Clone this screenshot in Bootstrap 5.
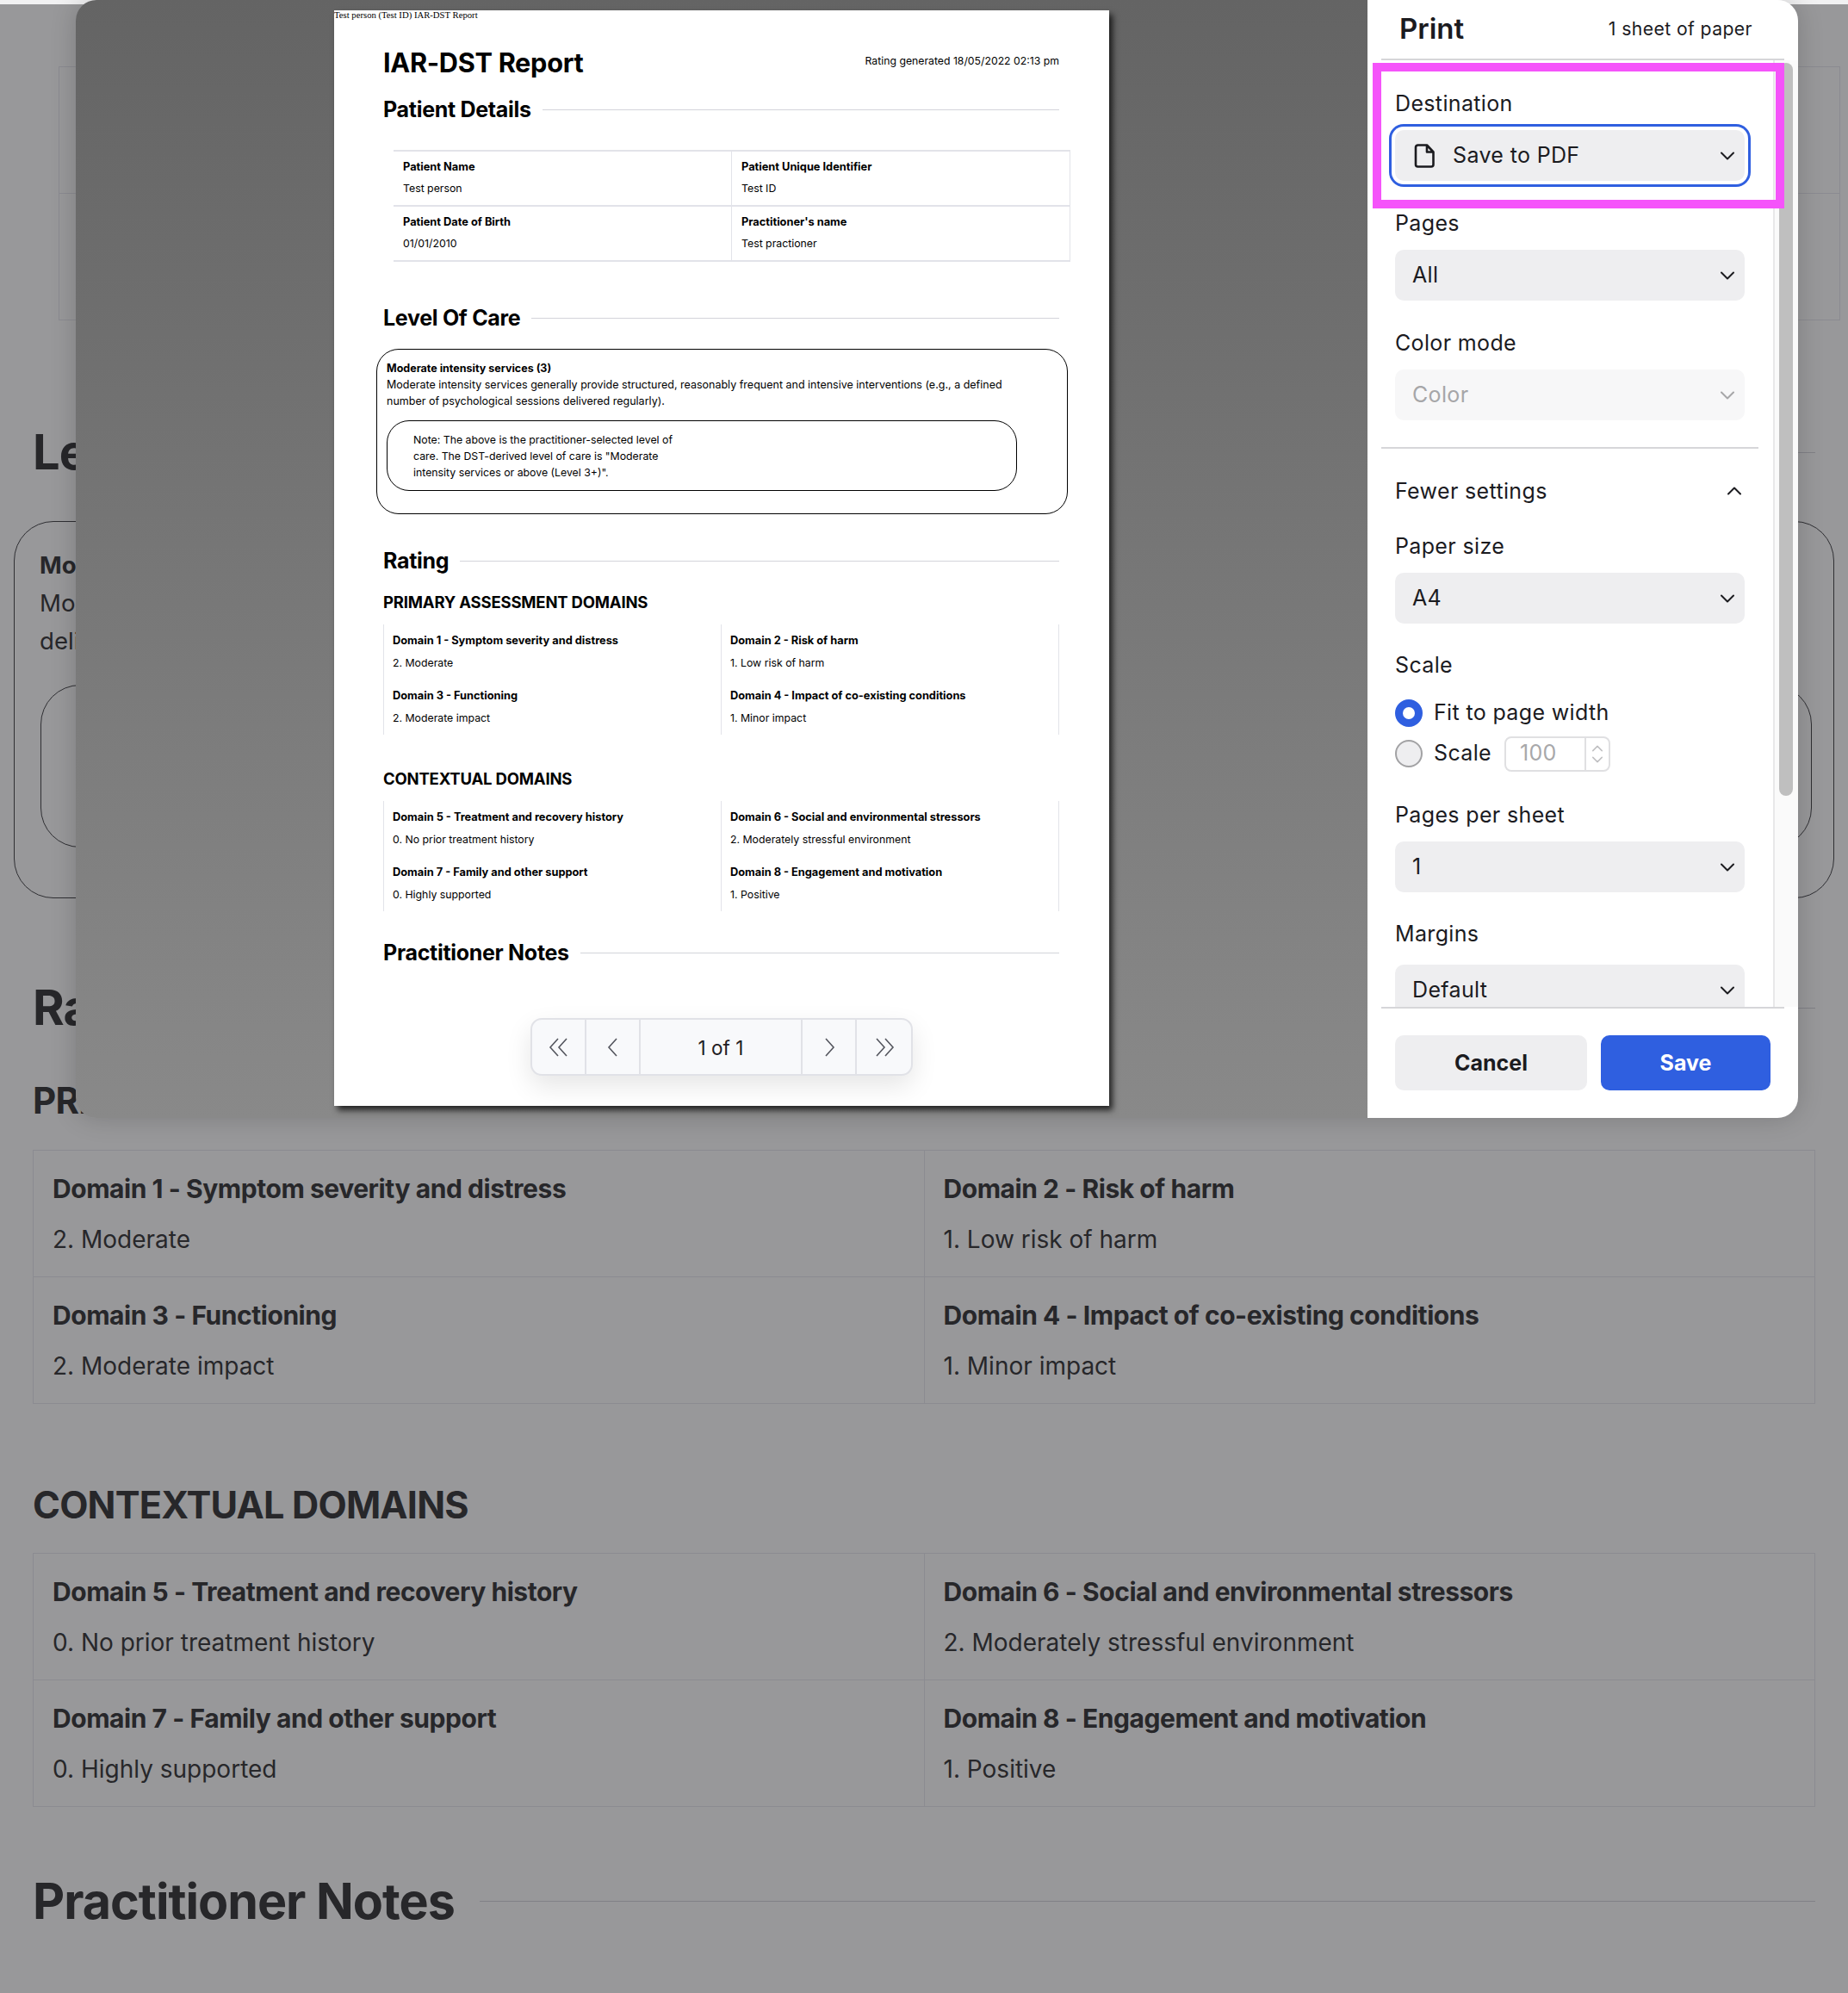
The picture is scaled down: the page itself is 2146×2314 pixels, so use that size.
<!DOCTYPE html>
<html lang="en">
<head>
    <meta charset="UTF-8">
    <title>IAR-DST Report - Print</title>
    <link href="https://cdn.jsdelivr.net/npm/bootstrap@5.3.0/dist/css/bootstrap.min.css" rel="stylesheet">
    <style>
        body { background: #98989a; color: #27272a; font-family: Inter, "Liberation Sans", sans-serif; overflow: hidden; height: 2314px; position: relative; }

        /* page behind the dialog */
        .top-strip { height: 5px; background: #f1f1f2; }
        .back-page { padding: 0 38px; }
        .back-grid { table-layout: fixed; --bs-table-bg: transparent; --bs-table-color: #27272a; --bs-table-border-color: #8b8b91; }
        .back-grid td { padding: 26px 22px 25px; }
        .back-grid p { line-height: 36px; }
        .back-grid .cell-title { font-size: 30px; font-weight: 700; letter-spacing: -.45px; margin-bottom: 23px; }
        .back-grid .cell-value { font-size: 28px; margin: 0; }
        .back-top { margin: 72px -29px 0 30px; width: calc(100% + -1px); }
        .back-head { font-size: 56px; line-height: 70px; font-weight: 700; letter-spacing: -1px; gap: 20px; }
        .back-head i { flex: 1; height: 1px; background: #808086; }
        .back-sub { font-size: 42px; line-height: 50px; font-weight: 700; letter-spacing: -.8px; }
        .back-card { margin: 45px -22px 92px -22px; padding: 28px 24px 0 29px; border: 1px solid #2f2f33; border-radius: 46px; height: 438px; font-size: 27.6px; line-height: 44px; }
        .back-note { border: 1px solid #2f2f33; border-radius: 46px; height: 189px; margin: 29px 1px 0 1px; }
        .back-level { margin-top: 118px; }
        .back-primary { margin-top: 48px; }
        .back-t1 { margin-top: 32px; }
        .back-context { margin-top: 92px; font-size: 43.2px; }
        .back-t2 { margin-top: 31px; }
        .back-notes { margin-top: 74px; font-size: 57.4px; gap: 29px; }

        /* print dialog */
        .print-modal { position: absolute; top: 0; left: 88px; width: 2000px; height: 1298px; border-radius: 24px; overflow: hidden; box-shadow: 0 0 30px rgba(0, 0, 0, .18); }
        .preview-pane { width: 1500px; background: linear-gradient(#646464, #898989); padding-top: 12px; }
        .sheet { position: relative; width: 900px; height: 1272px; margin: 0 auto; background: #fff; color: #000; box-shadow: 4px 5px 7px rgba(0, 0, 0, .75); }
        .run-head { font: 10.7px/11px "Liberation Serif", serif; height: 43px; }
        .sheet-body { padding: 0 58px 0 57px; }
        .sheet-title { font-size: 30.7px; line-height: 36px; font-weight: 700; letter-spacing: -.3px; }
        .sheet-date { font-size: 12.25px; line-height: 16px; padding-bottom: 4px; }
        .sheet-head { font-size: 25px; line-height: 30px; font-weight: 700; letter-spacing: -.3px; gap: 13px; }
        .sheet-head i { flex: 1; height: 1px; background: #d3d4da; }
        .sheet-sub { font-size: 18.5px; line-height: 24px; font-weight: 700; letter-spacing: -.2px; }
        .sheet-grid { font-size: 12.3px; line-height: 16px; }
        .sheet-grid p { margin: 0; }
        .sheet-grid b { display: block; font-size: 12.8px; font-weight: 700; }
        .detail-grid { margin: 32px -13px 50px 12px; border-top: 2px solid #e2e3e9; }
        .detail-grid > div { height: 64px; padding: 10px 11px 0; border-bottom: 2px solid #e2e3e9; border-right: 1px solid #e2e3e9; }
        .detail-grid b { margin-bottom: 9px; }
        .level-box { margin: 21px -10px 39px -8px; padding: 12px 60px 26px 11px; border: 1px solid #000; border-radius: 26px; font-size: 12.5px; line-height: 19px; }
        .level-box p { margin: 0; }
        .level-box b { font-weight: 700; }
        .note-box { width: 732px; margin-top: 13px; padding: 12px 30px 11px; border: 1px solid #000; border-radius: 26px; font-size: 12.3px; }
        .note-box p { width: 315px; }
        .domain-grid { margin-top: 14px; border-right: 1px solid #e2e3e9; }
        .domain-grid > div { height: 64px; padding: 11px 10px 0; border-left: 1px solid #e2e3e9; }
        .domain-grid b { margin-bottom: 10px; }
        .mt-sheet-1 { margin-top: 21px; }
        .mt-sheet-2 { margin-top: 21px; }
        .mt-sheet-3 { margin-top: 39px; }
        .mt-sheet-4 { margin-top: 33px; }

        .pager { position: absolute; left: 228px; top: 1170px; height: 67px; background: #f8f9fb; border: 2px solid #e1e2e7; border-radius: 13px; box-shadow: 0 12px 30px rgba(0, 0, 0, .1); color: #54565e; }
        .pager > div { width: 63px; border-right: 2px solid #e1e2e7; }
        .pager > div:last-child { border-right: 0; }
        .pager > .page-count { width: 188px; padding-top: 3px; font-size: 22.5px; color: #1f2024; }

        .print-panel { width: 500px; background: #fff; color: #1b1b1f; position: relative; }
        .panel-head { height: 70px; margin: 0 16px; padding: 0 37px 0 21px; border-bottom: 2px solid #d6d6d9; }
        .panel-head h1 { font-size: 33px; font-weight: 600; margin: 0; }
        .panel-head span { font-size: 21.2px; letter-spacing: .4px; }
        .panel-scroll { height: 1099px; overflow: hidden; margin-left: 16px; }
        .panel-fields { width: 455px; padding: 35px 33px 0 16px; flex: none; font-size: 25px; letter-spacing: .35px; }
        .field-label { line-height: 30px; margin-bottom: 16px; }
        .pick-box { height: 59px; border-radius: 10px; background: #eeeef0; padding: 0 12px 0 20px; margin-bottom: 34px; }
        .pick-box.is-focus { box-shadow: 0 0 0 4px #fff, 0 0 0 7px #2f5fe0; padding-left: 22px; gap: 21px; }
        .pick-box.is-off { background: #f7f7f8; color: #a6a6a8; }
        .pick-box.tight { margin-bottom: 33px; }
        .panel-rule { width: 438px; height: 2px; background: #d6d6d9; margin: 31px 0 34px -16px; }
        .fewer-row { margin-bottom: 34px; padding-right: 4px; }
        .margins-label { margin-bottom: 21px; }
        .scale-row { height: 32px; gap: 13px; margin-top: 25px; }
        .scale-row + .scale-row { margin-top: 15px; margin-bottom: 40px; }
        .form-check-input.print-radio { width: 32px; height: 32px; margin: 0; flex: none; background-color: #eeeef0; border: 2px solid #a2a2a4; }
        .form-check-input.print-radio:checked { background-color: #2f5fe0; border-color: #2f5fe0; }
        .num-box { width: 123px; height: 41px; margin-left: 2px; border: 2px solid #e0e0e2; border-radius: 8px; color: #a8a8aa; overflow: hidden; }
        .num-box span { flex: 1; padding-left: 16px; }
        .num-box div { width: 28px; height: 100%; border-left: 2px solid #e0e0e2; gap: 5px; color: #c0c0c2; }
        .scroll-gutter { width: 29px; background: #fafafa; border-left: 2px solid #e8e8e9; padding: 3px 0 0 5px; }
        .scroll-thumb { width: 16px; height: 851px; background: #bfbfbf; border-radius: 8px; }
        .panel-foot { margin: 0 16px; padding: 31px 16px 0; gap: 16px; border-top: 2px solid #d6d6d9; }
        .panel-foot .btn { height: 64px; padding-top: 8px; font-size: 25px; font-weight: 700; border: 0; border-radius: 10px; }
        .btn-stay { width: 223px; background: #eeeef0; color: #1b1b1f; }
        .btn-keep { width: 197px; background: #2f5fe0; color: #fff; }
        .callout { position: absolute; left: 6px; top: 73px; width: 478px; height: 169px; border: 10px solid #f553fa; pointer-events: none; }
    </style>
</head>
<body>
    <svg width="0" height="0" class="position-absolute">
        <symbol id="chev-down" viewBox="0 0 16 10"><path d="M1 1.5l7 7 7-7" fill="none" stroke="currentColor" stroke-width="2" stroke-linecap="round" stroke-linejoin="round"/></symbol>
        <symbol id="chev-up" viewBox="0 0 16 10"><path d="M1 8.5l7-7 7 7" fill="none" stroke="currentColor" stroke-width="2" stroke-linecap="round" stroke-linejoin="round"/></symbol>
    </svg>

    <!-- Page behind the dialog -->
    <div class="top-strip"></div>
    <div class="back-page">
        <table class="table table-bordered mb-0 back-grid back-top">
            <tr><td><p class="cell-title">&nbsp;</p><p class="cell-value">&nbsp;</p></td><td><p class="cell-title">&nbsp;</p><p class="cell-value">&nbsp;</p></td></tr>
            <tr><td><p class="cell-title">&nbsp;</p><p class="cell-value">&nbsp;</p></td><td><p class="cell-title">&nbsp;</p><p class="cell-value">&nbsp;</p></td></tr>
        </table>

        <div class="d-flex align-items-center back-head back-level">Level Of Care<i></i></div>
        <div class="back-card">
            <strong>Moderate intensity services (3)</strong><br>
            Moderate intensity services generally provide structured, reasonably frequent and intensive interventions (e.g., a defined number of psychological sessions delivered regularly).
            <div class="back-note"></div>
        </div>

        <div class="d-flex align-items-center back-head">Rating<i></i></div>
        <div class="back-sub back-primary">PRIMARY ASSESSMENT DOMAINS</div>
        <table class="table table-bordered mb-0 back-grid back-t1">
            <tr><td><p class="cell-title">Domain 1 - Symptom severity and distress</p><p class="cell-value">2. Moderate</p></td><td><p class="cell-title">Domain 2 - Risk of harm</p><p class="cell-value">1. Low risk of harm</p></td></tr>
            <tr><td><p class="cell-title">Domain 3 - Functioning</p><p class="cell-value">2. Moderate impact</p></td><td><p class="cell-title">Domain 4 - Impact of co-existing conditions</p><p class="cell-value">1. Minor impact</p></td></tr>
        </table>

        <div class="back-sub back-context">CONTEXTUAL DOMAINS</div>
        <table class="table table-bordered mb-0 back-grid back-t2">
            <tr><td><p class="cell-title">Domain 5 - Treatment and recovery history</p><p class="cell-value">0. No prior treatment history</p></td><td><p class="cell-title">Domain 6 - Social and environmental stressors</p><p class="cell-value">2. Moderately stressful environment</p></td></tr>
            <tr><td><p class="cell-title">Domain 7 - Family and other support</p><p class="cell-value">0. Highly supported</p></td><td><p class="cell-title">Domain 8 - Engagement and motivation</p><p class="cell-value">1. Positive</p></td></tr>
        </table>

        <div class="d-flex align-items-center back-head back-notes">Practitioner Notes<i></i></div>
    </div>

    <!-- Print dialog -->
    <div class="print-modal d-flex">
        <div class="preview-pane">
            <div class="sheet">
                <div class="run-head">Test person (Test ID) IAR-DST Report</div>
                <div class="sheet-body">
                    <div class="d-flex justify-content-between align-items-center">
                        <div class="sheet-title">IAR-DST Report</div>
                        <div class="sheet-date">Rating generated 18/05/2022 02:13 pm</div>
                    </div>
                    <div class="d-flex align-items-center sheet-head mt-sheet-1">Patient Details<i></i></div>
                    <div class="row g-0 sheet-grid detail-grid">
                        <div class="col-6"><b>Patient Name</b><p>Test person</p></div>
                        <div class="col-6"><b>Patient Unique Identifier</b><p>Test ID</p></div>
                        <div class="col-6"><b>Patient Date of Birth</b><p>01/01/2010</p></div>
                        <div class="col-6"><b>Practitioner's name</b><p>Test practioner</p></div>
                    </div>
                    <div class="d-flex align-items-center sheet-head">Level Of Care<i></i></div>
                    <div class="level-box">
                        <p><b>Moderate intensity services (3)</b></p>
                        <p>Moderate intensity services generally provide structured, reasonably frequent and intensive interventions (e.g., a defined number of psychological sessions delivered regularly).</p>
                        <div class="note-box"><p>Note: The above is the practitioner-selected level of care. The DST-derived level of care is "Moderate intensity services or above (Level 3+)".</p></div>
                    </div>
                    <div class="d-flex align-items-center sheet-head">Rating<i></i></div>
                    <div class="sheet-sub mt-sheet-2">PRIMARY ASSESSMENT DOMAINS</div>
                    <div class="row g-0 sheet-grid domain-grid">
                        <div class="col-6"><b>Domain 1 - Symptom severity and distress</b><p>2. Moderate</p></div>
                        <div class="col-6"><b>Domain 2 - Risk of harm</b><p>1. Low risk of harm</p></div>
                        <div class="col-6"><b>Domain 3 - Functioning</b><p>2. Moderate impact</p></div>
                        <div class="col-6"><b>Domain 4 - Impact of co-existing conditions</b><p>1. Minor impact</p></div>
                    </div>
                    <div class="sheet-sub mt-sheet-3">CONTEXTUAL DOMAINS</div>
                    <div class="row g-0 sheet-grid domain-grid">
                        <div class="col-6"><b>Domain 5 - Treatment and recovery history</b><p>0. No prior treatment history</p></div>
                        <div class="col-6"><b>Domain 6 - Social and environmental stressors</b><p>2. Moderately stressful environment</p></div>
                        <div class="col-6"><b>Domain 7 - Family and other support</b><p>0. Highly supported</p></div>
                        <div class="col-6"><b>Domain 8 - Engagement and motivation</b><p>1. Positive</p></div>
                    </div>
                    <div class="d-flex align-items-center sheet-head mt-sheet-4">Practitioner Notes<i></i></div>
                </div>
                <div class="pager d-flex">
                    <div class="d-flex align-items-center justify-content-center"><svg width="24" height="24" viewBox="0 0 24 24" fill="none" stroke="currentColor" stroke-width="1.6"><path d="M11 2L2 12l9 10M21 2l-9 10 9 10"/></svg></div>
                    <div class="d-flex align-items-center justify-content-center"><svg width="14" height="24" viewBox="0 0 14 24" fill="none" stroke="currentColor" stroke-width="1.6"><path d="M11 2L2 12l9 10"/></svg></div>
                    <div class="page-count d-flex align-items-center justify-content-center">1 of 1</div>
                    <div class="d-flex align-items-center justify-content-center"><svg width="14" height="24" viewBox="0 0 14 24" fill="none" stroke="currentColor" stroke-width="1.6"><path d="M3 2l9 10-9 10"/></svg></div>
                    <div class="d-flex align-items-center justify-content-center"><svg width="24" height="24" viewBox="0 0 24 24" fill="none" stroke="currentColor" stroke-width="1.6"><path d="M3 2l9 10-9 10M13 2l9 10-9 10"/></svg></div>
                </div>
            </div>
        </div>

        <div class="print-panel">
            <div class="panel-head d-flex align-items-center justify-content-between">
                <h1>Print</h1>
                <span>1 sheet of paper</span>
            </div>
            <div class="panel-scroll d-flex">
                <div class="panel-fields">
                    <div class="field-label">Destination</div>
                    <div class="pick-box is-focus d-flex align-items-center">
                        <svg width="24" height="28" viewBox="0 0 24 28" fill="none" stroke="currentColor" stroke-width="2.6" stroke-linejoin="round"><path d="M4.5 1.5h10.5l7.500 8v14.500a2.500 2.500 0 0 1-2.500 2.500h-15.500a2.500 2.500 0 0 1-2.500-2.500v-20a2.500 2.500 0 0 1 2.500-2.500zM15 1.500v8h7.500"/></svg>
                        <span class="flex-grow-1">Save to PDF</span>
                        <svg width="16" height="10"><use href="#chev-down"/></svg>
                    </div>
                    <div class="field-label">Pages</div>
                    <div class="pick-box d-flex align-items-center justify-content-between">All<svg width="16" height="10"><use href="#chev-down"/></svg></div>
                    <div class="field-label">Color mode</div>
                    <div class="pick-box is-off d-flex align-items-center justify-content-between mb-0">Color<svg width="16" height="10"><use href="#chev-down"/></svg></div>
                    <div class="panel-rule"></div>
                    <div class="field-label d-flex align-items-center justify-content-between fewer-row">Fewer settings<svg width="16" height="10"><use href="#chev-up"/></svg></div>
                    <div class="field-label">Paper size</div>
                    <div class="pick-box tight d-flex align-items-center justify-content-between">A4<svg width="16" height="10"><use href="#chev-down"/></svg></div>
                    <div class="field-label">Scale</div>
                    <div class="scale-row d-flex align-items-center">
                        <input class="form-check-input print-radio" type="radio" name="scaleMode" checked>
                        <span>Fit to page width</span>
                    </div>
                    <div class="scale-row d-flex align-items-center">
                        <input class="form-check-input print-radio" type="radio" name="scaleMode">
                        <span>Scale</span>
                        <div class="num-box d-flex align-items-center">
                            <span>100</span>
                            <div class="d-flex flex-column align-items-center justify-content-center">
                                <svg width="12" height="8"><use href="#chev-up"/></svg>
                                <svg width="12" height="8"><use href="#chev-down"/></svg>
                            </div>
                        </div>
                    </div>
                    <div class="field-label">Pages per sheet</div>
                    <div class="pick-box tight d-flex align-items-center justify-content-between">1<svg width="16" height="10"><use href="#chev-down"/></svg></div>
                    <div class="field-label margins-label">Margins</div>
                    <div class="pick-box d-flex align-items-center justify-content-between">Default<svg width="16" height="10"><use href="#chev-down"/></svg></div>
                </div>
                <div class="scroll-gutter"><div class="scroll-thumb"></div></div>
            </div>
            <div class="panel-foot d-flex">
                <button class="btn btn-stay" type="button">Cancel</button>
                <button class="btn btn-keep" type="button">Save</button>
            </div>
            <div class="callout"></div>
        </div>
    </div>
</body>
</html>
